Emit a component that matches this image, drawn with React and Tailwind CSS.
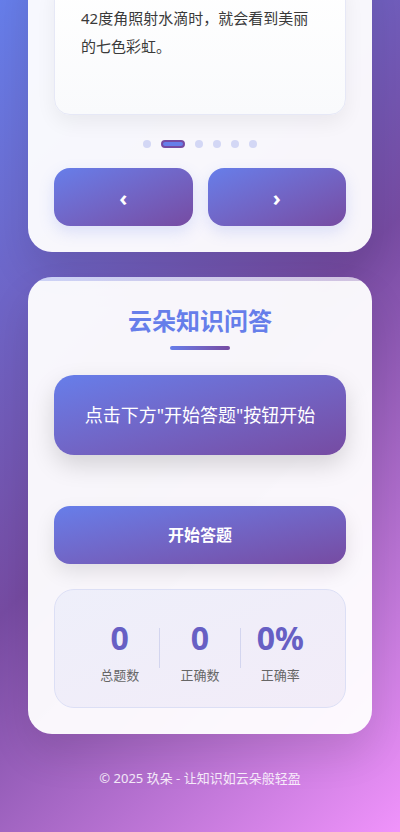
export default function App() {
  const dots = [0, 1, 2, 3, 4, 5]
  const active = 1
  const stats = [
    { value: '0', label: '总题数' },
    { value: '0', label: '正确数' },
    { value: '0%', label: '正确率' },
  ]

  return (
    <div
      className="min-h-[832px] h-[832px] overflow-hidden bg-[linear-gradient(135deg,#667eea_0%,#764ba2_50%,#f093fb_100%)] px-7"
      style={{ fontFamily: '"Noto Sans", "Noto Sans CJK SC", sans-serif' }}
    >
      {/* card carousel */}
      <div className="-mt-[47px] rounded-3xl bg-white/95 p-[26px] shadow-[0_20px_40px_rgba(0,0,0,0.1)]">
        <div className="rounded-2xl border border-[#e6e8f6] bg-gradient-to-b from-white to-[#f9fafc] px-[26px] pt-6 pb-[54px] shadow-[0_8px_20px_rgba(0,0,0,0.06)]">
          <p className="text-[15px] leading-[28px] text-[#3a3a3a]">
            42度角照射水滴时，就会看到美丽的七色彩虹。
          </p>
        </div>

        <div className="mt-[25px] flex items-center justify-center gap-2.5">
          {dots.map((d) =>
            d === active ? (
              <span key={d} className="h-2 w-6 rounded-full border-2 border-[#764ba2] bg-[#667eea]" />
            ) : (
              <span key={d} className="h-2 w-2 rounded-full bg-[#d3d7f5]" />
            )
          )}
        </div>

        <div className="mt-5 grid grid-cols-2 gap-[15px]">
          <button className="h-[58px] rounded-2xl bg-gradient-to-br from-[#667eea] to-[#764ba2] text-[22px] font-bold text-white shadow-[0_6px_16px_rgba(102,126,234,0.2)]">
            ‹
          </button>
          <button className="h-[58px] rounded-2xl bg-gradient-to-br from-[#667eea] to-[#764ba2] text-[22px] font-bold text-white shadow-[0_6px_16px_rgba(102,126,234,0.2)]">
            ›
          </button>
        </div>
      </div>

      {/* quiz */}
      <div className="mt-[25px] overflow-hidden rounded-3xl bg-white/95 shadow-[0_20px_40px_rgba(0,0,0,0.1)]">
        <div className="h-1 bg-gradient-to-r from-[#667eea]/30 to-[#764ba2]/30" />
        <div className="px-[26px] pt-6 pb-[26px]">
          <h2 className="text-center text-[24px] font-bold leading-8 text-[#667eea]">云朵知识问答</h2>
          <div className="mx-auto mt-[9px] h-1 w-[60px] rounded-full bg-gradient-to-r from-[#667eea] to-[#764ba2]" />

          <div className="mt-[25px] flex h-20 items-center justify-center rounded-[20px] bg-gradient-to-br from-[#667eea] to-[#764ba2] text-[18px] text-white shadow-[0_10px_25px_rgba(0,0,0,0.15)]">
            点击下方"开始答题"按钮开始
          </div>

          <button className="mt-[51px] h-[58px] w-full rounded-2xl bg-gradient-to-br from-[#667eea] to-[#764ba2] text-base font-bold text-white shadow-[0_8px_20px_rgba(0,0,0,0.1)]">
            开始答题
          </button>

          <div className="mt-[25px] grid grid-cols-[1fr_1px_1fr_1px_1fr] rounded-[20px] border border-[#dcdff5] bg-gradient-to-br from-[#eeeffa] to-[#f2ecf8] px-[25px] pt-[29px] pb-[22px]">
            {stats.map((s, i) => (
              <>
                {i > 0 && <div key={'d' + i} className="mt-[9px] h-10 w-px bg-[#d3d5ef]" />}
                <div key={s.label} className="flex flex-col items-center">
                  <span className="text-[32px] font-bold leading-[38px] text-[#675fc4]">{s.value}</span>
                  <span className="mt-2 text-[13px] leading-5 text-[#666]">{s.label}</span>
                </div>
              </>
            ))}
          </div>
        </div>
      </div>

      <p className="mt-[34px] text-center text-[13px] leading-5 text-white/85">© 2025 玖朵 - 让知识如云朵般轻盈</p>
    </div>
  )
}
